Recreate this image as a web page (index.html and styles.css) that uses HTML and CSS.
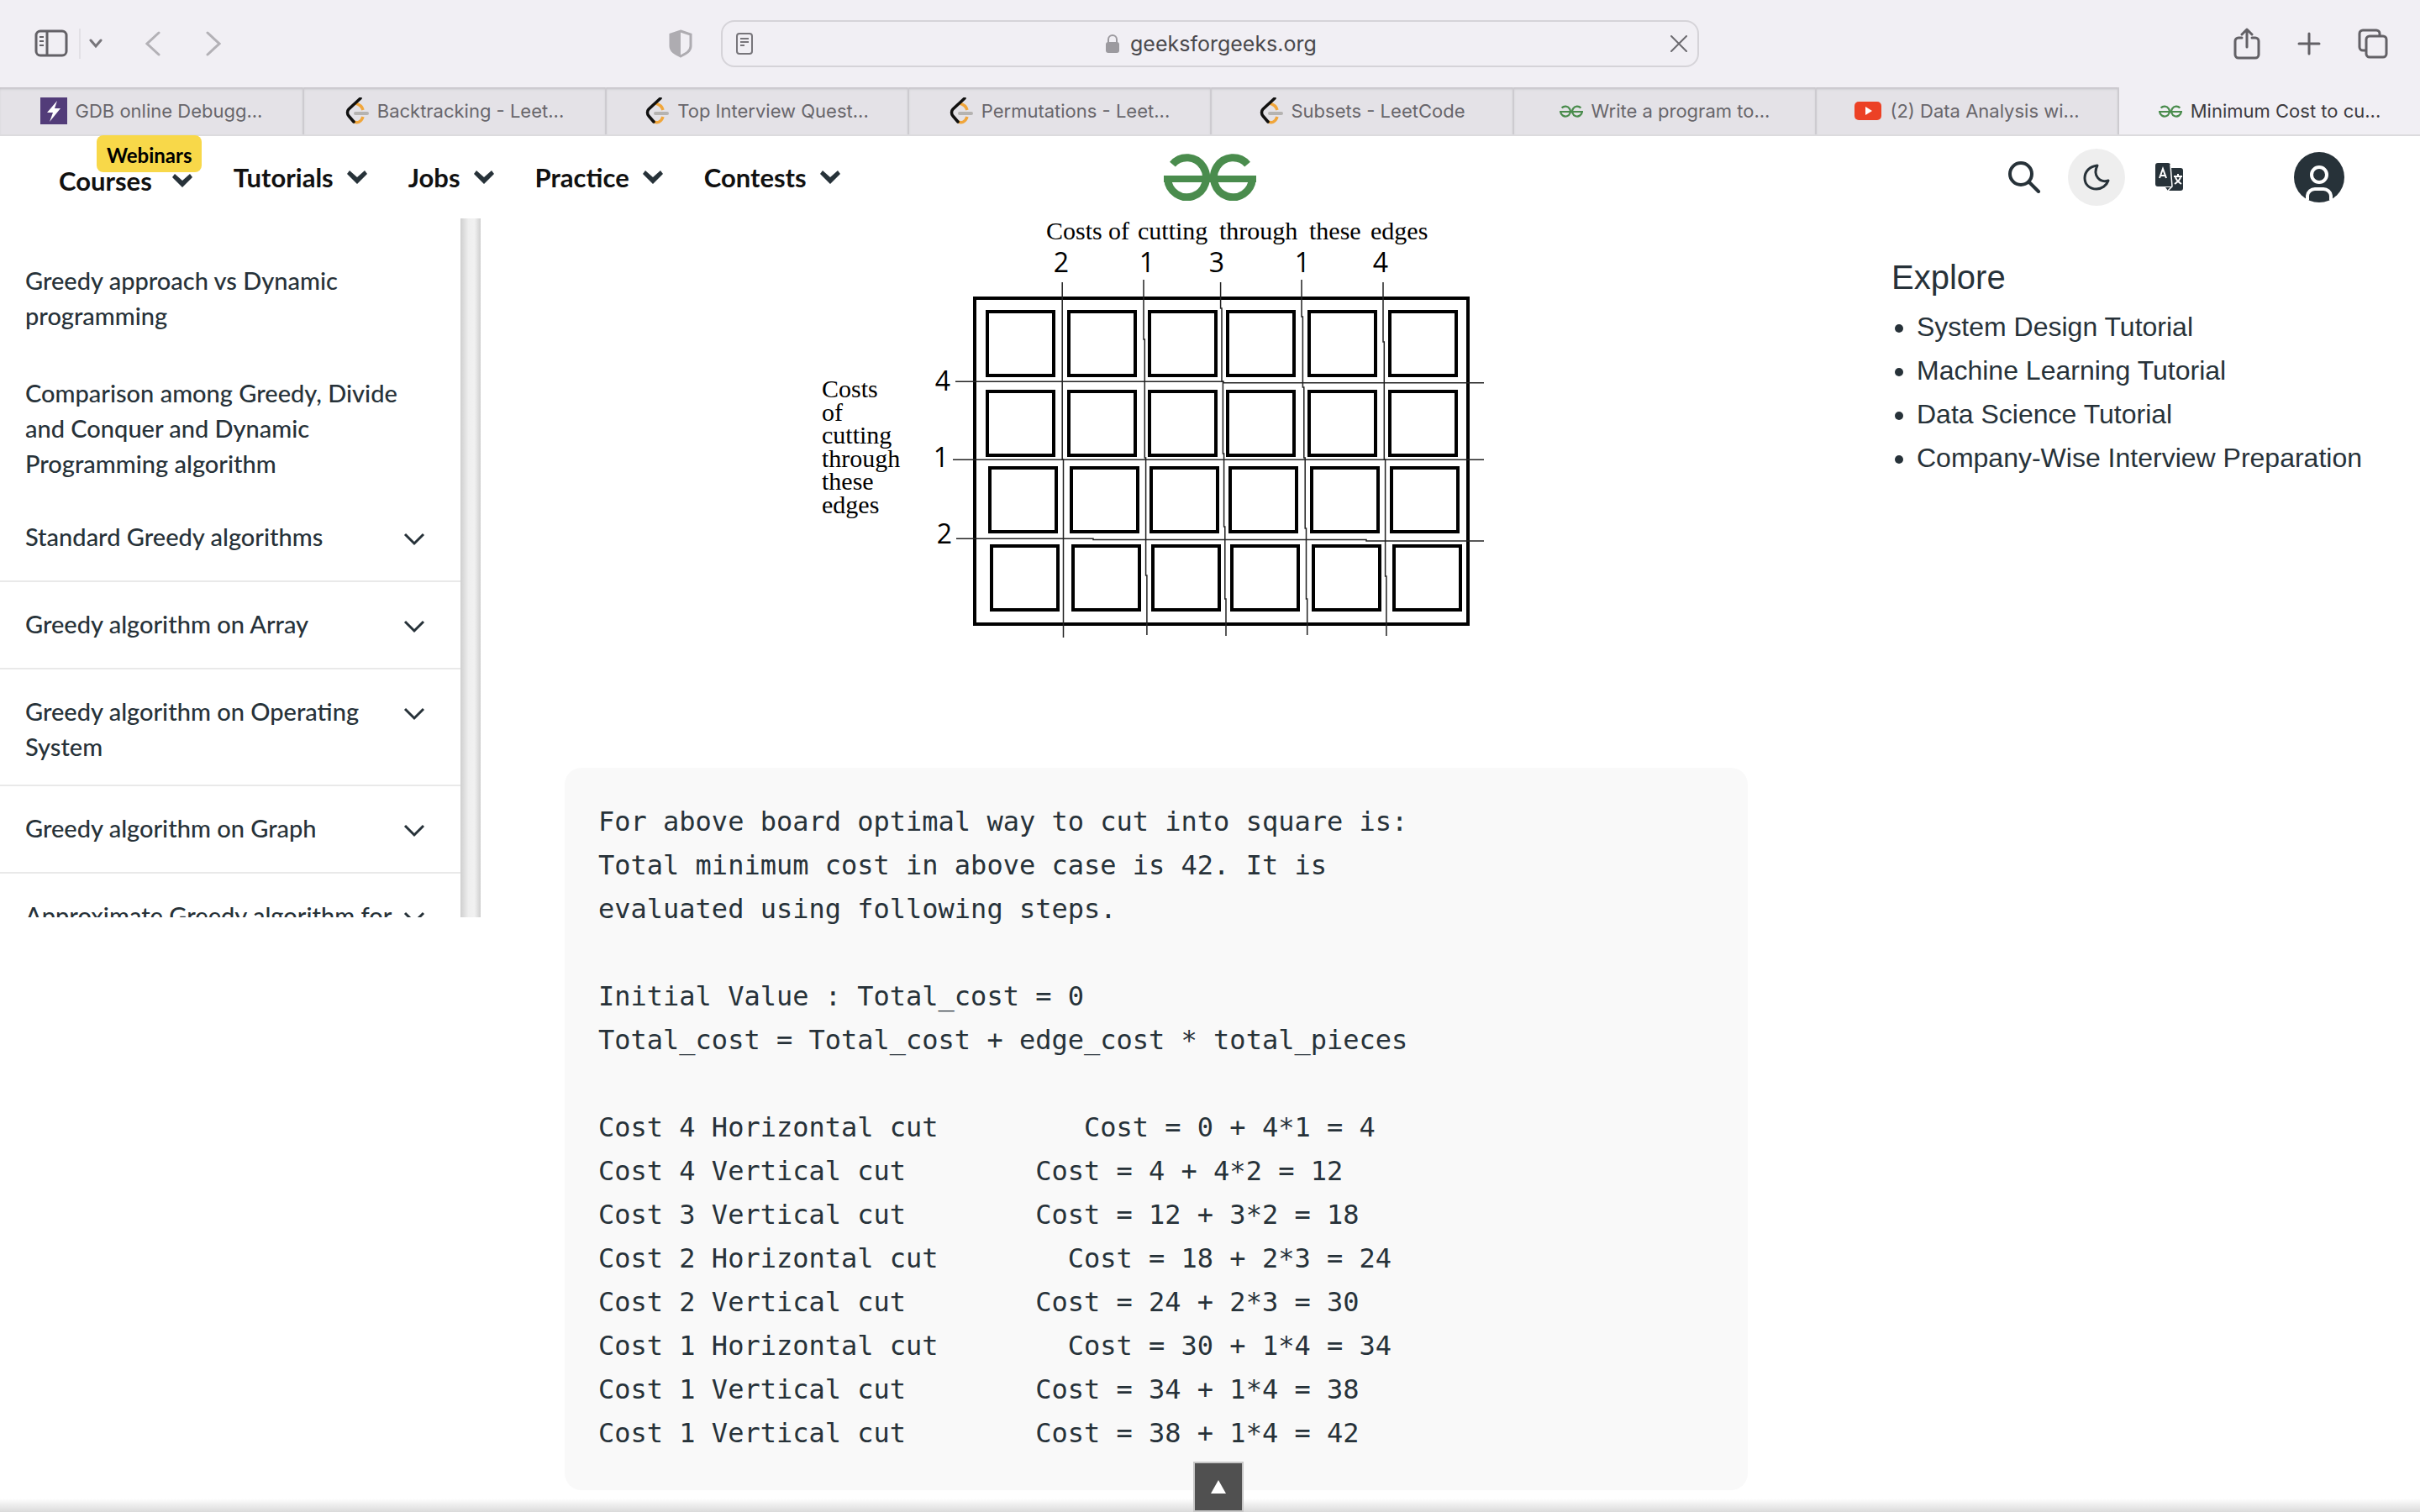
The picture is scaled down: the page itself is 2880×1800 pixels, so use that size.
FILE: index.html
```html
<!DOCTYPE html>
<html lang="en">
<head>
<meta charset="utf-8">
<title>Minimum Cost to cut a board into squares</title>
<link rel="stylesheet" href="styles.css">
</head>
<body>
<svg class="defs" aria-hidden="true">
  <symbol id="leet" viewBox="0 0 28 32">
    <path d="M12 7c4 1 8 4 9 8" fill="none" stroke="#f0a63c" stroke-width="3.5"/>
    <path d="M9 28c5 4 10 1 12-5" fill="none" stroke="#f0a63c" stroke-width="3.5"/>
    <path d="M18 1L4 14c-2 2-2 6 0 8l6 7" fill="none" stroke="#111" stroke-width="3.5" stroke-linecap="round"/>
    <path d="M12 19h14" stroke="#b5b3b1" stroke-width="4" stroke-linecap="round"/>
  </symbol>
  <symbol id="gfg" viewBox="0 0 110 56">
    <path d="M99.6 12.6A23 23.5 0 1 0 105.4 30M10.4 12.6A23 23.5 0 1 1 4.6 30" fill="none" stroke="currentColor" stroke-width="9"/>
    <path d="M0 26h110v8H0z" fill="currentColor"/>
  </symbol>
  <symbol id="nav-chevron" viewBox="0 0 28 18">
    <path d="M2 5l3-4 9 8 9-8 3 4-12 12z" fill="#273239"/>
  </symbol>
  <symbol id="chevron" viewBox="0 0 26 16">
    <path d="M2 2l11 11L24 2" fill="none" stroke="#273239" stroke-width="3"/>
  </symbol>
</svg>

<header class="browser">
  <div class="toolbar">
    <div class="tools tools-left">
      <button class="icon-btn" aria-label="Show sidebar"><svg width="40" height="34" viewBox="0 0 40 34" fill="none" stroke="#636166" stroke-width="3"><rect x="2" y="2" width="36" height="29" rx="5"/><path d="M15 2v29"/><path d="M6 9h5M6 14h5M6 19h5" stroke-width="2"/></svg></button>
      <span class="divider"></span>
      <button class="icon-btn" aria-label="Tab groups"><svg width="16" height="12" viewBox="0 0 16 12" fill="none" stroke="#77757a" stroke-width="3" stroke-linecap="round"><path d="M2 2l6 7 6-7"/></svg></button>
      <button class="icon-btn back" aria-label="Back"><svg width="18" height="30" viewBox="0 0 18 30" fill="none" stroke="#b3b1b6" stroke-width="3" stroke-linecap="round"><path d="M16 2L2 15l14 13"/></svg></button>
      <button class="icon-btn forward" aria-label="Forward"><svg width="18" height="30" viewBox="0 0 18 30" fill="none" stroke="#b3b1b6" stroke-width="3" stroke-linecap="round"><path d="M2 2l14 13L2 28"/></svg></button>
      <button class="icon-btn shield" aria-label="Privacy report"><svg width="28" height="34" viewBox="0 0 28 34"><path d="M14 2l12 4v14c0 6-6 9-12 12C8 29 2 26 2 20V6z" fill="none" stroke="#aeacb1" stroke-width="3"/><path d="M14 2v30C8 29 2 26 2 20V6z" fill="#aeacb1"/></svg></button>
    </div>
    <div class="address">
      <button class="icon-btn" aria-label="Reader view"><svg width="20" height="26" viewBox="0 0 20 26" fill="none" stroke="#77757a" stroke-width="2"><rect x="1" y="1" width="18" height="24" rx="3"/><path d="M5 7h10M5 11h10M5 15h5"/></svg></button>
      <label class="url">
        <svg width="18" height="24" viewBox="0 0 18 24" aria-hidden="true"><path d="M4 12V7a5 5 0 0 1 10 0v5" fill="none" stroke="#9c9a9f" stroke-width="2"/><rect x="1" y="10" width="16" height="13" rx="3" fill="#9c9a9f"/></svg>
        <input class="url-input" type="text" value="geeksforgeeks.org" aria-label="Address">
      </label>
      <button class="icon-btn" aria-label="Stop loading"><svg width="20" height="20" viewBox="0 0 20 20" stroke="#6c6a6f" stroke-width="2" stroke-linecap="round"><path d="M1 1l18 18M19 1L1 19"/></svg></button>
    </div>
    <div class="tools tools-right">
      <button class="icon-btn" aria-label="Share"><svg width="32" height="38" viewBox="0 0 32 38" fill="none" stroke="#636166" stroke-width="3" stroke-linecap="round"><path d="M10 12H6a4 4 0 0 0-4 4v16a4 4 0 0 0 4 4h20a4 4 0 0 0 4-4V16a4 4 0 0 0-4-4h-4M16 23V2M10 8l6-6 6 6" stroke-linejoin="round"/></svg></button>
      <button class="icon-btn" aria-label="New tab"><svg width="28" height="28" viewBox="0 0 28 28" stroke="#636166" stroke-width="3" stroke-linecap="round"><path d="M14 2v24M2 14h24"/></svg></button>
      <button class="icon-btn" aria-label="Tab overview"><svg width="36" height="36" viewBox="0 0 36 36" fill="none" stroke="#636166" stroke-width="3"><path d="M9 26H6a4 4 0 0 1-4-4V6a4 4 0 0 1 4-4h16a4 4 0 0 1 4 4v3"/><rect x="10" y="9" width="24" height="25" rx="4"/></svg></button>
    </div>
  </div>
  <nav class="tabs" aria-label="Open tabs">
    <a class="tab" href="#"><svg width="32" height="32" viewBox="0 0 32 32"><path d="M0 0h32v32H0z" fill="#523c79"/><path d="M20 4L8 18h7l-4 11 13-16h-7z" fill="#fff"/></svg>GDB online Debugg...</a>
    <a class="tab" href="#"><svg width="28" height="32"><use href="#leet"/></svg>Backtracking - Leet...</a>
    <a class="tab" href="#"><svg width="28" height="32"><use href="#leet"/></svg>Top Interview Quest...</a>
    <a class="tab" href="#"><svg width="28" height="32"><use href="#leet"/></svg>Permutations - Leet...</a>
    <a class="tab" href="#"><svg width="28" height="32"><use href="#leet"/></svg>Subsets - LeetCode</a>
    <a class="tab" href="#"><svg class="green" width="28" height="15"><use href="#gfg"/></svg>Write a program to...</a>
    <a class="tab" href="#"><svg width="32" height="22" viewBox="0 0 32 22"><rect width="32" height="22" rx="5" fill="#ec4125"/><path d="M13 6l8 5-8 5z" fill="#fff"/></svg>(2) Data Analysis wi...</a>
    <a class="tab active" href="#" aria-current="page"><svg class="green" width="28" height="15"><use href="#gfg"/></svg>Minimum Cost to cu...</a>
  </nav>
</header>

<div class="site-header">
  <nav class="menu" aria-label="Site">
    <a class="menu-item courses" href="#">Courses<svg width="28" height="18"><use href="#nav-chevron"/></svg><span class="badge">Webinars</span></a>
    <a class="menu-item" href="#">Tutorials<svg width="28" height="18"><use href="#nav-chevron"/></svg></a>
    <a class="menu-item" href="#">Jobs<svg width="28" height="18"><use href="#nav-chevron"/></svg></a>
    <a class="menu-item" href="#">Practice<svg width="28" height="18"><use href="#nav-chevron"/></svg></a>
    <a class="menu-item" href="#">Contests<svg width="28" height="18"><use href="#nav-chevron"/></svg></a>
  </nav>
  <a class="logo green" href="#" aria-label="Home"><svg width="110" height="56"><use href="#gfg"/></svg></a>
  <div class="actions">
    <button class="icon-btn" aria-label="Search"><svg width="40" height="38" viewBox="0 0 40 38" fill="none" stroke="#273239" stroke-width="4" stroke-linecap="round"><circle cx="16" cy="15" r="13"/><path d="M26 25l11 11"/></svg></button>
    <button class="icon-btn round" aria-label="Dark mode"><svg width="32" height="32" viewBox="0 0 32 32" fill="none" stroke="#273239" stroke-width="3" stroke-linejoin="round"><path d="M17 2C8 3 2 9 2 17s6 13 14 13c6 0 12-4 14-10-10 3-19-6-13-18z"/></svg></button>
    <button class="icon-btn translate" aria-label="Translate"><svg width="34" height="34" viewBox="0 0 34 34" fill="none"><path d="M18 6h12a3 3 0 0 1 3 3v21a3 3 0 0 1-3 3H15l-3-4h8z" fill="#273239"/><path d="M3 0h12a3 3 0 0 1 3 3l2 25H3a3 3 0 0 1-3-3V3a3 3 0 0 1 3-3z" fill="#273239"/><path d="M18 2l2 26-5 5" stroke="#fff" stroke-width="1.5"/><path d="M5 18l4-11 4 11M6 15h6M22 16h10M27 13v3M30 17c-1 4-4 6-7 8M24 17c1 4 4 6 7 8" stroke="#fff" stroke-width="2"/></svg></button>
    <button class="icon-btn" aria-label="Account"><svg width="60" height="60" viewBox="0 0 60 60" fill="none"><circle cx="30" cy="30" r="30" fill="#273239"/><path d="M16 57V52a9 9 0 0 1 9-8h10a9 9 0 0 1 9 8v5" stroke="#fff" stroke-width="4"/><circle cx="30" cy="27" r="9" stroke="#fff" stroke-width="4"/></svg></button>
  </div>
</div>

<div class="layout">
  <aside class="sidebar">
    <ul class="topics">
      <li><a class="topic plain" href="#">Greedy approach vs Dynamic programming</a></li>
      <li><a class="topic plain" href="#">Comparison among Greedy, Divide and Conquer and Dynamic Programming algorithm</a></li>
      <li><a class="topic group" href="#"><span>Standard Greedy algorithms</span><svg width="26" height="16"><use href="#chevron"/></svg></a></li>
      <li><a class="topic group" href="#"><span>Greedy algorithm on Array</span><svg width="26" height="16"><use href="#chevron"/></svg></a></li>
      <li><a class="topic group" href="#"><span>Greedy algorithm on Operating System</span><svg width="26" height="16"><use href="#chevron"/></svg></a></li>
      <li><a class="topic group" href="#"><span>Greedy algorithm on Graph</span><svg width="26" height="16"><use href="#chevron"/></svg></a></li>
      <li><a class="topic group" href="#"><span>Approximate Greedy algorithm for</span><svg width="26" height="16"><use href="#chevron"/></svg></a></li>
    </ul>
    <div class="scroll-track"></div>
  </aside>

  <main class="article">
    <svg class="board" width="800" height="520" viewBox="970 250 800 520" role="img" aria-label="Board with the cost of each cut">
      <g class="board-label">
        <text x="1245" y="285">Costs</text><text x="1319" y="285">of</text><text x="1354" y="285">cutting</text><text x="1451" y="285">through</text><text x="1558" y="285">these</text><text x="1631" y="285">edges</text>
        <text x="978" y="473">Costs</text><text x="978" y="501">of</text><text x="978" y="528">cutting</text><text x="978" y="556">through</text><text x="978" y="583">these</text><text x="978" y="611">edges</text>
      </g>
      <g class="board-cost">
        <text x="1263" y="324">2</text><text x="1365" y="324">1</text><text x="1448" y="324">3</text><text x="1550" y="324">1</text><text x="1643" y="324">4</text>
        <text x="1122" y="465">4</text><text x="1120" y="556">1</text><text x="1124" y="647">2</text>
      </g>
      <g fill="none" stroke="#000" stroke-width="4">
        <path d="M1160 355h587v388h-587z"/>
        <path d="M1175 371h79v76h-79zM1272 371h79v76h-79zM1368 371h79v76h-79zM1461 371h79v76h-79zM1558 371h79v76h-79zM1654 371h79v76h-79z"/>
        <path d="M1175 466h79v76h-79zM1272 466h79v76h-79zM1368 466h79v76h-79zM1461 466h79v76h-79zM1558 466h79v76h-79zM1654 466h79v76h-79z"/>
        <path d="M1178 557h79v76h-79zM1275 557h79v76h-79zM1370 557h79v76h-79zM1464 557h79v76h-79zM1561 557h79v76h-79zM1656 557h79v76h-79z"/>
        <path d="M1180 650h79v76h-79zM1277 650h79v76h-79zM1372 650h79v76h-79zM1466 650h79v76h-79zM1563 650h79v76h-79zM1659 650h79v76h-79z"/>
      </g>
      <g fill="none" stroke="#222" stroke-width="1.5">
        <path d="M1264.2 336V547h1.3V759"/>
        <path d="M1361 333V404h1.3V545h1.3V685h1.3V756"/>
        <path d="M1452.6 336V367h1.4V454h1.4V540h1.2V627h1.2V713h1.2V757"/>
        <path d="M1549 333V377h1.4V461h1.4V545h1.4V629h1.3V713h1.2V756"/>
        <path d="M1646 336V407h1.3V547h1.3V686h1.3V757"/>
        <path d="M1137 454.3H1456v1.4H1766M1134 547.2H1766M1138 641.3H1301v1.3H1626v1.3H1766"/>
      </g>
    </svg>
    <pre class="code">For above board optimal way to cut into square is:
Total minimum cost in above case is 42. It is
evaluated using following steps.

Initial Value : Total_cost = 0
Total_cost = Total_cost + edge_cost * total_pieces

Cost 4 Horizontal cut         Cost = 0 + 4*1 = 4
Cost 4 Vertical cut        Cost = 4 + 4*2 = 12
Cost 3 Vertical cut        Cost = 12 + 3*2 = 18
Cost 2 Horizontal cut        Cost = 18 + 2*3 = 24
Cost 2 Vertical cut        Cost = 24 + 2*3 = 30
Cost 1 Horizontal cut        Cost = 30 + 1*4 = 34
Cost 1 Vertical cut        Cost = 34 + 1*4 = 38
Cost 1 Vertical cut        Cost = 38 + 1*4 = 42</pre>
  </main>

  <aside class="explore">
    <h2 class="explore-title">Explore</h2>
    <ul class="explore-list">
      <li><a href="#">System Design Tutorial</a></li>
      <li><a href="#">Machine Learning Tutorial</a></li>
      <li><a href="#">Data Science Tutorial</a></li>
      <li><a href="#">Company-Wise Interview Preparation</a></li>
    </ul>
  </aside>
</div>

<div class="bottom-shade"></div>
<button class="to-top" aria-label="Back to top"><svg width="20" height="18" viewBox="0 0 20 18"><path d="M10 1l9 16H1z" fill="#fff"/></svg></button>
</body>
</html>
```
FILE: styles.css
```css
* { box-sizing: border-box; }
body {
  margin: 0;
  background: #fff;
  color: #273239;
  font-family: Lato, "Open Sans", sans-serif;
  min-height: 100vh;
  overflow: hidden;
}
a { color: inherit; text-decoration: none; }
ul { margin: 0; padding: 0; }
svg { display: block; flex: none; }
.defs { position: absolute; width: 0; height: 0; }
.green { color: #4a8c4d; }
.icon-btn {
  display: flex;
  align-items: center;
  justify-content: center;
  padding: 0;
  border: 0;
  background: none;
}

/* Browser chrome */
.browser { font-family: Inter, sans-serif; background: #f1eff4; border-bottom: 2px solid #dcdbde; }
.toolbar {
  display: grid;
  grid-template-columns: 1fr 1164px 1fr;
  align-items: center;
  height: 104px;
}
.tools { display: flex; align-items: center; }
.tools-left { padding: 0 34px 0 41px; }
.divider { width: 2px; height: 36px; margin: 0 10px 0 13px; background: #e2e0e5; }
.back { margin-left: 51px; }
.forward { margin-left: 54px; }
.shield { margin-left: auto; }
.tools-right { justify-content: flex-end; gap: 44px; padding-right: 38px; }
.address {
  display: flex;
  align-items: center;
  justify-content: space-between;
  height: 56px;
  padding: 0 12px 0 16px;
  border: 2px solid #d5d3d8;
  border-radius: 16px;
}
.url { display: flex; align-items: center; gap: 12px; }
.url-input {
  width: 224px;
  padding: 0;
  border: 0;
  background: none;
  color: #4a494d;
  font: 25px/32px Inter, sans-serif;
}
.tabs { display: grid; grid-template-columns: repeat(8, 1fr); }
.tab {
  display: flex;
  align-items: center;
  justify-content: center;
  gap: 10px;
  height: 56px;
  border-left: 2px solid #cdcbd0;
  background: #e4e2e7;
  box-shadow: inset 0 3px 3px -1px #c2c0c5;
  color: #68666b;
  font-size: 22px;
  white-space: nowrap;
}
.tab:first-child { border-left: 0; }
.tab.active { background: none; box-shadow: none; color: #3d3b40; }

/* Site header */
.site-header {
  display: grid;
  grid-template-columns: 1fr auto 1fr;
  align-items: center;
  height: 98px;
  padding: 0 70px;
}
.menu { display: flex; gap: 47px; }
.menu-item {
  display: flex;
  align-items: center;
  gap: 14px;
  color: #111;
  font-size: 31px;
  font-weight: 700;
  line-height: 40px;
}
.courses { position: relative; gap: 22px; padding-top: 8px; }
.badge {
  position: absolute;
  left: 45px;
  bottom: 30px;
  padding: 4px 12px 0;
  border-radius: 8px;
  background: #f8d849;
  color: #000;
  font-size: 24px;
}
.actions { display: flex; align-items: center; justify-content: flex-end; padding-right: 20px; }
.round { width: 68px; height: 68px; margin-left: 32px; border-radius: 50%; background: #eee; }
.translate { margin: 0 131px 0 36px; }

/* Page body */
.layout { display: grid; grid-template-columns: 572px minmax(0, 1fr) 629px; align-items: start; }
.sidebar { display: flex; max-height: 832px; overflow: hidden; }
.topics { flex: 1; padding-top: 19px; list-style: none; }
.topic { display: flex; font-size: 29px; font-weight: 500; line-height: 42px; }
.plain { padding: 34px 60px 16px 30px; }
.group {
  align-items: flex-start;
  justify-content: space-between;
  min-height: 104px;
  padding: 29px 42px 24px 30px;
  border-bottom: 2px solid #e9e9e9;
}
.group svg { margin-top: 16px; }
.group span { flex: 0 1 440px; }
.scroll-track {
  flex: none;
  width: 24px;
  background: linear-gradient(90deg, #cfcfcf, #efefef 40%, #f1f1f1 70%, #cfcfcf);
}
.article { padding: 0 171px 0 100px; }
.board { margin: -10px auto 144px 298px; }
.board-label { font-family: "Liberation Serif", serif; font-size: 30px; }
.board-cost { font-family: "Open Sans", sans-serif; font-size: 32px; text-anchor: middle; }
.code {
  margin: 0;
  padding: 38px 40px 42px;
  border-radius: 20px;
  background: #f9f9f9;
  font: 32px/52px "DejaVu Sans Mono", monospace;
}
.explore { padding-top: 44px; font-family: "Liberation Sans", sans-serif; }
.explore-title { margin: 0 0 7px; font-size: 40px; font-weight: 400; line-height: 52px; }
.explore-list { padding-left: 30px; font-size: 32px; line-height: 52px; }

/* Overlays */
.bottom-shade {
  position: fixed;
  inset: auto 0 0;
  height: 16px;
  background: linear-gradient(transparent, #dadada);
}
.to-top {
  position: fixed;
  left: calc(50% - 20px);
  bottom: 0;
  display: flex;
  align-items: center;
  justify-content: center;
  width: 60px;
  height: 60px;
  padding: 0;
  border: 2px solid #c8c8c8;
  background: #505050;
}
```
